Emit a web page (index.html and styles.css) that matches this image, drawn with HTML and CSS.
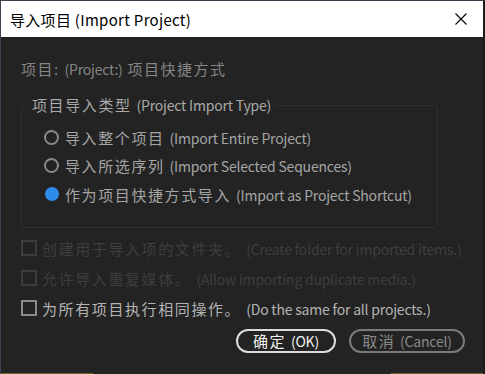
FILE: index.html
```html
<!DOCTYPE html>
<html lang="zh">
<head>
  <meta charset="UTF-8" />
  <meta name="viewport" content="width=device-width, initial-scale=1.0" />
  <title>导入项目 (Import Project)</title>
  <link rel="stylesheet" href="styles.css">
</head>
<body>
  <div class="window">
    <div class="titlebar">
      <span class="title">导入项目 (Import Project)</span>
      <svg class="close" width="12" height="12" viewBox="0 0 12 12">
        <path d="M0.5 0.5 L11.5 11.5 M11.5 0.5 L0.5 11.5" stroke="#000" stroke-width="1.1" fill="none" />
      </svg>
    </div>

    <div class="content">
      <div class="project-line">项目: <span class="en">(Project:)</span> 项目快捷方式</div>

      <fieldset class="group">
        <legend>项目导入类型 <span class="en">(Project Import Type)</span></legend>
        <div class="radio-row">
          <span class="radio"></span>
          <span class="label">导入整个项目 <span class="en">(Import Entire Project)</span></span>
        </div>
        <div class="radio-row">
          <span class="radio"></span>
          <span class="label">导入所选序列 <span class="en">(Import Selected Sequences)</span></span>
        </div>
        <div class="radio-row">
          <span class="radio checked"></span>
          <span class="label">作为项目快捷方式导入 <span class="en">(Import as Project Shortcut)</span></span>
        </div>
      </fieldset>

      <div class="checks">
        <div class="check-row disabled">
          <span class="box"></span>
          <span class="label">创建用于导入项的文件夹。 <span class="en">(Create folder for imported items.)</span></span>
        </div>
        <div class="check-row disabled">
          <span class="box"></span>
          <span class="label">允许导入重复媒体。 <span class="en">(Allow importing duplicate media.)</span></span>
        </div>
        <div class="check-row">
          <span class="box"></span>
          <span class="label">为所有项目执行相同操作。 <span class="en">(Do the same for all projects.)</span></span>
        </div>
      </div>

      <div class="buttons">
        <button class="btn primary">确定 <span class="en">(OK)</span></button>
        <button class="btn">取消 <span class="en">(Cancel)</span></button>
      </div>
    </div>

    <div class="bottom-edge">
      <span class="olive left"></span>
      <span class="gap"></span>
      <span class="olive right"></span>
    </div>
  </div>
</body>
</html>
```

FILE: styles.css
```css
* {
  box-sizing: border-box;
}
body {
  margin: 0;
  width: 485px;
  height: 374px;
  overflow: hidden;
  background: #232323;
  font-family: "Noto Sans CJK SC", "Noto Sans", sans-serif;
}
.window {
  width: 485px;
  height: 374px;
  display: flex;
  flex-direction: column;
  border-top: 1px solid #3a4250;
  border-left: 1px solid #3a4250;
  border-right: 2px solid #1c1c1c;
  background: #232323;
}
.titlebar {
  height: 36px;
  flex-shrink: 0;
  background: #ffffff;
  display: flex;
  align-items: center;
  justify-content: space-between;
  padding: 0 16px 0 9px;
}
.title {
  font-size: 15px;
  color: #000;
  letter-spacing: 0.3px;
}
.content {
  flex: 1;
  padding: 22px 0 0 20px;
}
.en {
  font-size: 14px;
  letter-spacing: -0.2px;
}
.project-line {
  font-size: 15px;
  color: #858585;
  line-height: 20px;
  letter-spacing: 1.5px;
  white-space: nowrap;
}
.group {
  margin: 17px 0 0 0;
  width: 417px;
  height: 132px;
  border: 1px solid #2f2f2f;
  border-radius: 4px;
  padding: 9px 0 0 22px;
}
.group legend {
  font-size: 15px;
  color: #a9a9a9;
  padding: 0 4px 0 5px;
  margin-left: -17px;
  line-height: 18px;
  letter-spacing: 1.6px;
  white-space: nowrap;
}
.radio-row {
  display: flex;
  align-items: center;
  height: 28.5px;
}
.radio {
  width: 15px;
  height: 15px;
  flex-shrink: 0;
  border-radius: 50%;
  border: 2px solid #8a8a8a;
  margin-right: 6px;
}
.radio.checked {
  width: 14px;
  height: 14px;
  margin: 0 6px 0 1px;
  border: none;
  background: #2d8ceb;
}
.label {
  font-size: 15px;
  color: #a5a5a5;
  letter-spacing: 1.6px;
  white-space: nowrap;
}
.checks {
  margin-top: 5px;
}
.check-row {
  display: flex;
  align-items: center;
  height: 30px;
}
.box {
  width: 16px;
  height: 16px;
  flex-shrink: 0;
  border: 2px solid #8a8a8a;
  margin-right: 5px;
}
.check-row .label {
  color: #b4b4b4;
}
.check-row.disabled .box {
  border-color: #3c3c3c;
}
.check-row.disabled .label {
  color: #3e3e3e;
}
.buttons {
  display: flex;
  justify-content: flex-end;
  gap: 13px;
  padding-right: 18px;
  margin-top: 6px;
}
.btn {
  height: 24px;
  border-radius: 12px;
  background: transparent;
  border: 2px solid #7a7a7a;
  color: #8a8a8a;
  font-family: "Noto Sans CJK SC", "Noto Sans", sans-serif;
  font-size: 15px;
  line-height: 18px;
  padding: 0;
  width: 116px;
  letter-spacing: 1.5px;
  white-space: nowrap;
}
.btn.primary {
  border-color: #dcdcdc;
  color: #f0f0f0;
  width: 100px;
}
.bottom-edge {
  display: flex;
  height: 1px;
  flex-shrink: 0;
}
.olive {
  background: #6a6a20;
}
.olive.left {
  width: 92px;
}
.gap {
  flex: 1;
}
.olive.right {
  width: 92px;
}
```
